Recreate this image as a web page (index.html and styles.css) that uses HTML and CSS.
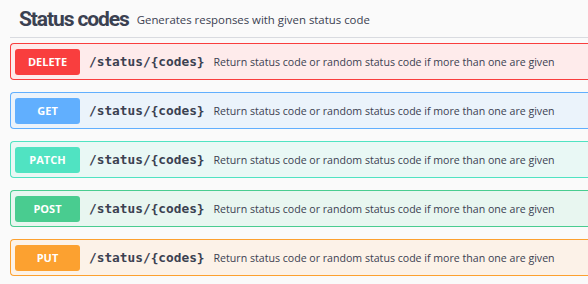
FILE: index.html
```html
<!DOCTYPE html>
<html lang="en">
<head>
  <meta charset="UTF-8" />
  <meta name="viewport" content="width=device-width, initial-scale=1.0" />
  <title>Status codes</title>
  <link rel="stylesheet" href="styles.css">
</head>
<body>
  <div class="tag-section">
    <h3 class="tag">
      <span class="tag-name">Status codes</span>
      <small class="tag-desc">Generates responses with given status code</small>
    </h3>

    <div class="opblock delete">
      <span class="method">DELETE</span>
      <span class="path">/status/{codes}</span>
      <span class="summary">Return status code or random status code if more than one are given</span>
    </div>
    <div class="opblock get">
      <span class="method">GET</span>
      <span class="path">/status/{codes}</span>
      <span class="summary">Return status code or random status code if more than one are given</span>
    </div>
    <div class="opblock patch">
      <span class="method">PATCH</span>
      <span class="path">/status/{codes}</span>
      <span class="summary">Return status code or random status code if more than one are given</span>
    </div>
    <div class="opblock post">
      <span class="method">POST</span>
      <span class="path">/status/{codes}</span>
      <span class="summary">Return status code or random status code if more than one are given</span>
    </div>
    <div class="opblock put">
      <span class="method">PUT</span>
      <span class="path">/status/{codes}</span>
      <span class="summary">Return status code or random status code if more than one are given</span>
    </div>
  </div>
</body>
</html>
```

FILE: styles.css
```css
body {
  margin: 0;
  background: #fafafa;
  overflow: hidden;
  font-family: "Open Sans", sans-serif;
  color: #3b4151;
}
.tag-section {
  display: flex;
  flex-direction: column;
  gap: 12px;
  padding-left: 10px;
  width: 600px;
}
.tag {
  display: flex;
  align-items: center;
  gap: 8px;
  margin: 0 0 -7px;
  height: 37px;
  padding-left: 9px;
  border-bottom: 1px solid #d9dbe0;
  white-space: nowrap;
}
.tag-name {
  font-family: Roboto, sans-serif;
  font-size: 21px;
  font-weight: 700;
  letter-spacing: -1.1px;
}
.tag-desc {
  font-size: 11.4px;
  font-weight: 400;
  padding-top: 2px;
}
.opblock {
  display: flex;
  align-items: center;
  height: 35px;
  padding: 0 4px;
  border: 1px solid;
  border-right: none;
  border-radius: 4px 0 0 4px;
  white-space: nowrap;
}
.method {
  width: 65px;
  height: 26px;
  line-height: 26px;
  border-radius: 3px;
  text-align: center;
  color: #fff;
  font-size: 11px;
  font-weight: 700;
}
.path {
  margin-left: 9px;
  font-family: "DejaVu Sans Mono", monospace;
  font-size: 12.8px;
  font-weight: 700;
}
.summary {
  margin-left: 9px;
  font-size: 10.6px;
}
.delete { background: #feebeb; border-color: #f93e3e; }
.delete .method { background: #f93e3e; }
.get { background: #ebf3fb; border-color: #61affe; }
.get .method { background: #61affe; }
.patch { background: #e9f8f5; border-color: #50e3c2; }
.patch .method { background: #50e3c2; }
.post { background: #e8f6f0; border-color: #49cc90; }
.post .method { background: #49cc90; }
.put { background: #fcf2e8; border-color: #fca130; }
.put .method { background: #fca130; }
```
